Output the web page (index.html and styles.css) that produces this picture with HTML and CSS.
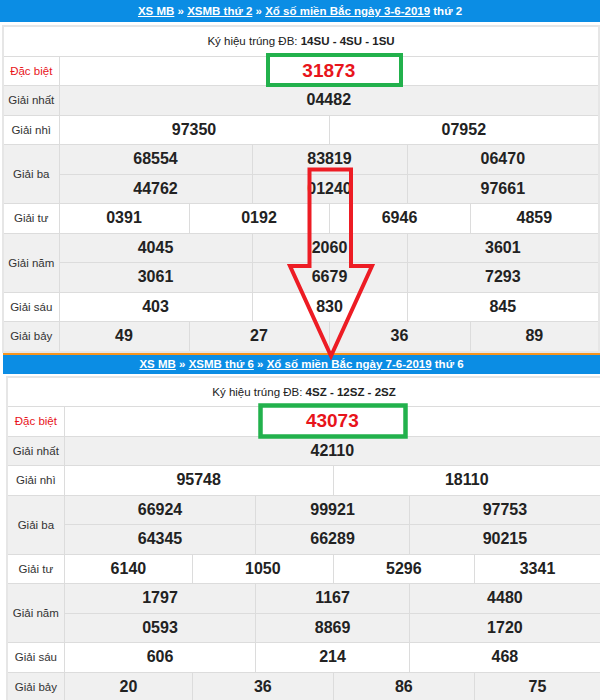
FILE: index.html
```html
<!DOCTYPE html>
<html lang="vi">
<head>
<meta charset="utf-8">
<title>XSMB</title>
<link rel="stylesheet" href="styles.css">
</head>
<body>
<div class="page">
  <section class="sec sec1">
    <div class="hdr"><a>XS MB</a> » <a>XSMB thứ 2</a> » <a>Xổ số miền Bắc ngày 3-6-2019</a> thứ 2</div>
    <table class="tbl t1">
      <colgroup><col class="c0"><col class="c1"><col class="c2"><col class="c3"><col class="c4"><col class="c5"><col class="c6"></colgroup>
      <tr class="w"><td colspan="7" class="kh">Ký hiệu trúng ĐB: <b>14SU - 4SU - 1SU</b></td></tr>
      <tr class="w"><td class="lb red">Đặc biệt</td><td colspan="6" class="db">31873</td></tr>
      <tr class="g"><td class="lb">Giải nhất</td><td colspan="6">04482</td></tr>
      <tr class="w"><td class="lb">Giải nhì</td><td colspan="3">97350</td><td colspan="3">07952</td></tr>
      <tr class="g"><td class="lb" rowspan="2">Giải ba</td><td colspan="2">68554</td><td colspan="2">83819</td><td colspan="2">06470</td></tr>
      <tr class="g"><td colspan="2">44762</td><td colspan="2">01240</td><td colspan="2">97661</td></tr>
      <tr class="w"><td class="lb">Giải tư</td><td>0391</td><td colspan="2">0192</td><td colspan="2">6946</td><td>4859</td></tr>
      <tr class="g"><td class="lb" rowspan="2">Giải năm</td><td colspan="2">4045</td><td colspan="2">2060</td><td colspan="2">3601</td></tr>
      <tr class="g"><td colspan="2">3061</td><td colspan="2">6679</td><td colspan="2">7293</td></tr>
      <tr class="w"><td class="lb">Giải sáu</td><td colspan="2">403</td><td colspan="2">830</td><td colspan="2">845</td></tr>
      <tr class="g"><td class="lb">Giải bảy</td><td>49</td><td colspan="2">27</td><td colspan="2">36</td><td>89</td></tr>
    </table>
  </section>
  <section class="sec sec2">
    <div class="hdr"><a>XS MB</a> » <a>XSMB thứ 6</a> » <a>Xổ số miền Bắc ngày 7-6-2019</a> thứ 6</div>
    <table class="tbl t2">
      <colgroup><col class="c0"><col class="c1"><col class="c2"><col class="c3"><col class="c4"><col class="c5"><col class="c6"></colgroup>
      <tr class="w"><td colspan="7" class="kh">Ký hiệu trúng ĐB: <b>4SZ - 12SZ - 2SZ</b></td></tr>
      <tr class="w"><td class="lb red">Đặc biệt</td><td colspan="6" class="db">43073</td></tr>
      <tr class="g"><td class="lb">Giải nhất</td><td colspan="6">42110</td></tr>
      <tr class="w"><td class="lb">Giải nhì</td><td colspan="3">95748</td><td colspan="3">18110</td></tr>
      <tr class="g"><td class="lb" rowspan="2">Giải ba</td><td colspan="2">66924</td><td colspan="2">99921</td><td colspan="2">97753</td></tr>
      <tr class="g"><td colspan="2">64345</td><td colspan="2">66289</td><td colspan="2">90215</td></tr>
      <tr class="w"><td class="lb">Giải tư</td><td>6140</td><td colspan="2">1050</td><td colspan="2">5296</td><td>3341</td></tr>
      <tr class="g"><td class="lb" rowspan="2">Giải năm</td><td colspan="2">1797</td><td colspan="2">1167</td><td colspan="2">4480</td></tr>
      <tr class="g"><td colspan="2">0593</td><td colspan="2">8869</td><td colspan="2">1720</td></tr>
      <tr class="w"><td class="lb">Giải sáu</td><td colspan="2">606</td><td colspan="2">214</td><td colspan="2">468</td></tr>
      <tr class="g"><td class="lb">Giải bảy</td><td>20</td><td colspan="2">36</td><td colspan="2">86</td><td>75</td></tr>
    </table>
  </section>
  <svg class="overlay" width="600" height="700" viewBox="0 0 600 700" aria-hidden="true">
    <rect x="268" y="55" width="133" height="30" fill="none" stroke="#22b14c" stroke-width="4"/>
    <rect x="260.5" y="405.5" width="145" height="31" fill="none" stroke="#22b14c" stroke-width="4.5"/>
    <polygon points="309.5,169.5 351,169.5 351,266 372,266 331,356 290,266 309.5,266" fill="none" stroke="#ed1c24" stroke-width="4" stroke-linejoin="miter"/>
  </svg>
</div>
</body>
</html>
```
FILE: styles.css
```css
html, body {
  margin: 0;
  padding: 0;
  background: #fff;
}
.page {
  position: relative;
  width: 600px;
  height: 700px;
  overflow: hidden;
  font-family: "Liberation Sans", Arial, sans-serif;
}
.hdr {
  background: #0b8de4;
  color: #fff;
  font-weight: bold;
  font-size: 11.5px;
  text-align: center;
  height: 22px;
  line-height: 22px;
  white-space: nowrap;
}
.hdr a {
  color: #fff;
  text-decoration: underline;
}
.sec2 {
  margin-left: 3px;
}
.sec2 .hdr {
  border-top: 2px solid #f7941d;
  height: 19px;
  line-height: 19px;
}
.tbl {
  border-collapse: collapse;
  table-layout: fixed;
  border: 2px solid #e6e6e6;
}
.t1 {
  margin: 3px 0 0 2px;
  width: 598px;
}
.t2 {
  margin: 2px 0 0 3px;
  width: 596px;
}
.t1 .c0 { width: 56px; }
.t1 .c1 { width: 130px; }
.t1 .c2 { width: 63px; }
.t1 .c3 { width: 77px; }
.t1 .c4 { width: 78px; }
.t1 .c5 { width: 63px; }
.t1 .c6 { width: 129px; }
.t2 .c0 { width: 57px; }
.t2 .c1 { width: 128px; }
.t2 .c2 { width: 63px; }
.t2 .c3 { width: 77px; }
.t2 .c4 { width: 76px; }
.t2 .c5 { width: 65px; }
.t2 .c6 { width: 126px; }
.tbl td {
  border: 1px solid #dcdcdc;
  height: 28.5px;
  padding: 0;
  text-align: center;
  vertical-align: middle;
  font-weight: bold;
  font-size: 16px;
  color: #222;
}
.tbl tr.w td { background: #fff; }
.tbl tr.g td { background: #f0f0f0; }
.tbl td.lb {
  font-weight: normal;
  font-size: 11.5px;
  color: #333;
}
.tbl td.lb.red {
  color: #e8141b;
}
.tbl td.kh {
  font-weight: normal;
  font-size: 11.5px;
  color: #222;
}
.tbl td.kh b {
  font-weight: bold;
}
.tbl td.db {
  color: #e8141b;
  font-size: 19px;
}
.overlay {
  position: absolute;
  left: 0;
  top: 0;
  pointer-events: none;
}
```
